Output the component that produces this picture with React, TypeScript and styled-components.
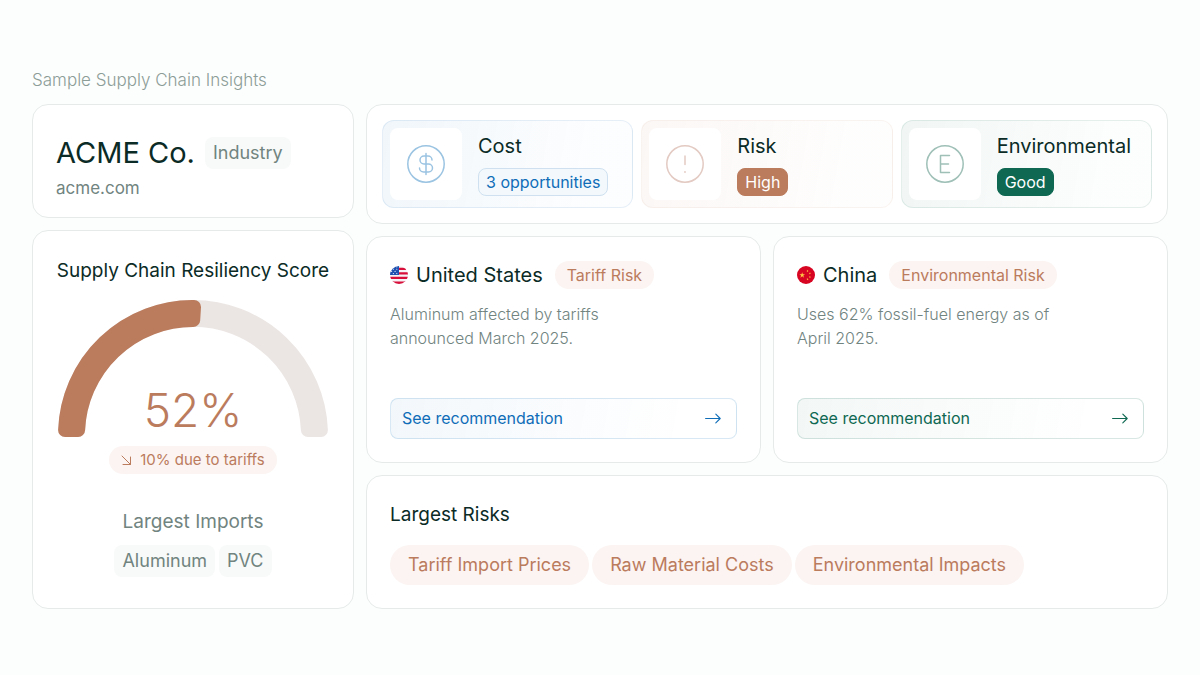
import React from 'react';
import styled, { createGlobalStyle } from 'styled-components';

const ink = '#0b2b26';
const muted = '#71847f';
const rust = '#bb7b5d';
const green = '#0e6852';
const blue = '#0f6db8';

type Tone = 'blue' | 'rust' | 'green';

const tones: Record<Tone, { rgb: string; icon: string; text: string; edge: number; tint: number }> = {
  blue: { rgb: '15, 109, 184', icon: '#9bc4e2', text: blue, edge: 0.1, tint: 0.06 },
  rust: { rgb: '187, 123, 93', icon: '#e3cac2', text: rust, edge: 0.08, tint: 0.06 },
  green: { rgb: '14, 104, 82', icon: '#9fc0b7', text: green, edge: 0.1, tint: 0.06 },
};

const GlobalStyle = createGlobalStyle`
  * { box-sizing: border-box; }
  body {
    margin: 0;
    background: #fcfefd;
    color: ${ink};
    font-family: Inter, "Liberation Sans", sans-serif;
  }
  h1, h2, h3, p, ul { margin: 0; padding: 0; font-weight: 400; }
  ul { list-style: none; }
`;

const Page = styled.main`
  padding: 68px 32px 66px;
`;

const Caption = styled.p`
  margin-bottom: 12px;
  color: #8c9d98;
  font-size: 17px;
  font-weight: 300;
  line-height: 24px;
`;

const Dashboard = styled.div`
  display: grid;
  grid-template-columns: 322px minmax(0, 1fr);
  gap: 12px;
`;

const Column = styled.div`
  display: flex;
  flex-direction: column;
  gap: 12px;
`;

const Card = styled.section`
  padding: 24px 23px 23px;
  border: 1px solid #e6ebea;
  border-radius: 16px;
  background: #fff;
`;

const CompanyCard = styled(Card)`
  padding-bottom: 15px;
`;

const CompanyLine = styled.div`
  display: flex;
  align-items: center;
  gap: 10px;
  padding-top: 3px;
`;

const CompanyName = styled.h1`
  font-size: 29px;
  line-height: 42px;
`;

const Tag = styled.span`
  padding: 0 8px;
  border-radius: 8px;
  background: #f8faf9;
  color: ${muted};
  font-size: 18px;
  line-height: 32px;
`;

const SiteLink = styled.a`
  display: block;
  width: max-content;
  color: ${muted};
  font-size: 17px;
  line-height: 28px;
  text-decoration: none;
`;

const ScoreCard = styled(Card)`
  display: flex;
  flex: 1;
  flex-direction: column;
  align-items: center;
  padding-top: 26px;
`;

const Heading = styled.h2`
  font-size: 19px;
  line-height: 28px;
  white-space: nowrap;
`;

const Gauge = styled.div`
  position: relative;
  width: 270px;
  margin-top: 15px;

  svg { display: block; width: 100%; }
`;

const Score = styled.p`
  position: absolute;
  inset: auto 0 0;
  color: ${rust};
  font-size: 46px;
  font-weight: 300;
  line-height: 54px;
  text-align: center;
`;

const Pill = styled.span<{ $large?: boolean }>`
  display: inline-flex;
  align-items: center;
  gap: 8px;
  padding: 0 ${p => (p.$large ? 18 : 12)}px;
  border-radius: 20px;
  background: #fbf4f2;
  color: ${rust};
  font-size: ${p => (p.$large ? 18 : 16)}px;
  line-height: ${p => (p.$large ? 40 : 28)}px;
  white-space: nowrap;
`;

const TrendPill = styled(Pill)`
  margin-top: 9px;
  font-size: 15px;
`;

const ImportsTitle = styled.h3`
  margin-top: 34px;
  color: ${muted};
  font-size: 19px;
  line-height: 28px;
`;

const TagList = styled.ul`
  display: flex;
  gap: 4px;
  margin-top: 9px;
`;

const MetricsCard = styled(Card)`
  display: grid;
  grid-template-columns: repeat(3, minmax(0, 1fr));
  gap: 8px;
  padding: 15px;
`;

const Metric = styled.article<{ $tone: Tone }>`
  display: flex;
  align-items: center;
  gap: 16px;
  padding: 7px;
  border: 1px solid rgba(${p => tones[p.$tone].rgb}, ${p => tones[p.$tone].edge});
  border-radius: 12px;
  background: linear-gradient(100deg, rgba(${p => tones[p.$tone].rgb}, ${p => tones[p.$tone].tint}), rgba(${p => tones[p.$tone].rgb}, 0.01) 80%);
`;

const IconBox = styled.div<{ $tone: Tone }>`
  display: flex;
  flex: none;
  align-items: center;
  justify-content: center;
  width: 72px;
  height: 72px;
  border-radius: 8px;
  background: #fff;
  color: ${p => tones[p.$tone].icon};
`;

const MetricBody = styled.div`
  display: flex;
  flex-direction: column;
  align-items: flex-start;
  gap: 8px;
`;

const MetricTitle = styled.h2`
  font-size: 20px;
  line-height: 28px;
`;

const Badge = styled.span<{ $tone: Tone; $solid?: boolean }>`
  padding: 0 7px;
  border: 1px solid ${p => (p.$solid ? tones[p.$tone].text : '#cfe1f0')};
  border-radius: 8px;
  background: ${p => (p.$solid ? tones[p.$tone].text : '#f2f8fc')};
  color: ${p => (p.$solid ? '#fff' : tones[p.$tone].text)};
  font-size: 16px;
  line-height: 26px;
  white-space: nowrap;
`;

const Countries = styled.div`
  display: grid;
  grid-template-columns: repeat(2, minmax(0, 1fr));
  gap: 12px;
`;

const CountryTitle = styled.div`
  display: flex;
  align-items: center;
  gap: 12px;
`;

const CountryName = styled.h2`
  display: flex;
  align-items: center;
  gap: 8px;
  font-size: 20px;
  line-height: 28px;
`;

const Note = styled.p`
  max-width: 260px;
  margin: 13px 0 48px;
  color: ${muted};
  font-size: 16px;
  font-weight: 300;
  line-height: 24px;
`;

const Recommendation = styled.button<{ $tone: Tone }>`
  display: flex;
  align-items: center;
  justify-content: space-between;
  width: 100%;
  padding: 0 15px 0 11px;
  border: 1px solid rgba(${p => tones[p.$tone].rgb}, 0.16);
  border-radius: 8px;
  background: linear-gradient(100deg, rgba(${p => tones[p.$tone].rgb}, 0.05), rgba(${p => tones[p.$tone].rgb}, 0) 85%);
  color: ${p => tones[p.$tone].text};
  font: inherit;
  font-size: 16px;
  line-height: 39px;
  cursor: pointer;
`;

const RisksCard = styled(Card)`
  padding-top: 25px;
`;

const PillList = styled.ul`
  display: flex;
  flex-wrap: wrap;
  gap: 3px;
  margin-top: 16px;
`;

const CircleIcon = ({ children }: { children: React.ReactNode }) => (
  <svg width="48" height="48" viewBox="0 0 48 48" fill="none" stroke="currentColor" strokeWidth="1.5" strokeLinecap="round" strokeLinejoin="round" aria-hidden="true">
    <circle cx="24" cy="24" r="18.2" />
    {children}
  </svg>
);

const CostIcon = () => (
  <CircleIcon>
    <path d="M24 13.5v21M30 20a4 4 0 0 0-4-4h-4a4 4 0 0 0 0 8h4.5a4 4 0 0 1 0 8h-5a4 4 0 0 1-4-4" />
  </CircleIcon>
);

const RiskIcon = () => (
  <CircleIcon>
    <path d="M24 16v8.5" />
    <circle cx="24" cy="32" r=".9" fill="currentColor" stroke="none" />
  </CircleIcon>
);

const EnvironmentIcon = () => (
  <CircleIcon>
    <path d="M28.5 15.5h-9v17h9M19.5 24h8" />
  </CircleIcon>
);

const ArrowRight = () => (
  <svg width="16" height="12" viewBox="0 0 16 12" fill="none" stroke="currentColor" strokeWidth="1.1" strokeLinecap="round" strokeLinejoin="round" aria-hidden="true">
    <path d="M.6 5.5h14.6M10.8 1.2l4.4 4.3-4.4 4.3" />
  </svg>
);

const ArrowDownRight = () => (
  <svg width="11" height="11" viewBox="0 0 11 11" fill="none" stroke="currentColor" strokeLinecap="round" strokeLinejoin="round" aria-hidden="true">
    <path d="M1 1l8.5 8.5M9.5 2v7.5H2" />
  </svg>
);

const star = 'M0-1L.225-.309H.951L.363.118.588.809 0 .382-.588.809-.363.118-.951-.309H-.225Z';

const UsFlag = () => (
  <svg width="18" height="18" viewBox="0 0 18 18" aria-hidden="true">
    <clipPath id="us-disc"><circle cx="9" cy="9" r="9" /></clipPath>
    <g clipPath="url(#us-disc)">
      <path fill="#f5f3f5" d="M0 0h18v18H0z" />
      <path fill="#d80f3a" d="M8 1.8h10v2.3H8zM8 6.3h10v2.3H8zM0 10.8h18v2.3H0zM0 15.4h18V18H0z" />
      <path fill="#1d50b0" d="M0 0h9v9H0z" />
      {[[3.4, 3.2], [6.8, 3.2], [6.8, .9], [1.6, 5.4], [5.1, 5.4], [3.4, 7.6], [6.8, 7.6]].map(([x, y]) => (
        <path key={`${x}-${y}`} fill="#fff" transform={`translate(${x} ${y}) scale(.9)`} d={star} />
      ))}
    </g>
  </svg>
);

const ChinaFlag = () => (
  <svg width="18" height="18" viewBox="0 0 18 18" aria-hidden="true">
    <circle cx="9" cy="9" r="9" fill="#d80522" />
    <g fill="#ffc845">
      <path transform="translate(5.2 9.2) scale(3)" d={star} />
      <path transform="translate(10.6 5) rotate(20) scale(1.2)" d={star} />
      <path transform="translate(12.9 7.4) rotate(40) scale(1.2)" d={star} />
      <path transform="translate(12.9 11) scale(1.2)" d={star} />
      <path transform="translate(10.6 13.2) rotate(20) scale(1.2)" d={star} />
    </g>
  </svg>
);

const metrics: { title: string; value: string; tone: Tone; solid: boolean; icon: React.ReactNode }[] = [
  { title: 'Cost', value: '3 opportunities', tone: 'blue', solid: false, icon: <CostIcon /> },
  { title: 'Risk', value: 'High', tone: 'rust', solid: true, icon: <RiskIcon /> },
  { title: 'Environmental', value: 'Good', tone: 'green', solid: true, icon: <EnvironmentIcon /> },
];

const countries: { name: string; risk: string; note: string; tone: Tone; flag: React.ReactNode }[] = [
  { name: 'United States', risk: 'Tariff Risk', note: 'Aluminum affected by tariffs announced March 2025.', tone: 'blue', flag: <UsFlag /> },
  { name: 'China', risk: 'Environmental Risk', note: 'Uses 62% fossil-fuel energy as of April 2025.', tone: 'green', flag: <ChinaFlag /> },
];

const risks = ['Tariff Import Prices', 'Raw Material Costs', 'Environmental Impacts'];

export default function App() {
  return (
    <Page>
      <GlobalStyle />
      <Caption>Sample Supply Chain Insights</Caption>
      <Dashboard>
        <Column>
          <CompanyCard>
            <CompanyLine>
              <CompanyName>ACME Co.</CompanyName>
              <Tag>Industry</Tag>
            </CompanyLine>
            <SiteLink href="#acme">acme.com</SiteLink>
          </CompanyCard>
          <ScoreCard>
            <Heading>Supply Chain Resiliency Score</Heading>
            <Gauge>
              <svg viewBox="0 0 270 137" strokeWidth="14" strokeLinejoin="round" aria-hidden="true">
                <path fill="#ebe6e4" stroke="#ebe6e4" d="M7.1 130A128 128 0 0 1 262.9 130H249.9A115 115 0 0 0 20.1 130Z" />
                <path fill={rust} stroke={rust} d="M7.1 130A128 128 0 0 1 136 7L135.2 20A115 115 0 0 0 20.1 130Z" />
              </svg>
              <Score>52%</Score>
            </Gauge>
            <TrendPill><ArrowDownRight />10% due to tariffs</TrendPill>
            <ImportsTitle>Largest Imports</ImportsTitle>
            <TagList>
              <li><Tag as="div">Aluminum</Tag></li>
              <li><Tag as="div">PVC</Tag></li>
            </TagList>
          </ScoreCard>
        </Column>
        <Column>
          <MetricsCard>
            {metrics.map(m => (
              <Metric key={m.title} $tone={m.tone}>
                <IconBox $tone={m.tone}>{m.icon}</IconBox>
                <MetricBody>
                  <MetricTitle>{m.title}</MetricTitle>
                  <Badge $tone={m.tone} $solid={m.solid}>{m.value}</Badge>
                </MetricBody>
              </Metric>
            ))}
          </MetricsCard>
          <Countries>
            {countries.map(c => (
              <Card key={c.name}>
                <CountryTitle>
                  <CountryName>{c.flag}{c.name}</CountryName>
                  <Pill>{c.risk}</Pill>
                </CountryTitle>
                <Note>{c.note}</Note>
                <Recommendation type="button" $tone={c.tone}>See recommendation<ArrowRight /></Recommendation>
              </Card>
            ))}
          </Countries>
          <RisksCard>
            <Heading>Largest Risks</Heading>
            <PillList>
              {risks.map(r => <li key={r}><Pill $large>{r}</Pill></li>)}
            </PillList>
          </RisksCard>
        </Column>
      </Dashboard>
    </Page>
  );
}
